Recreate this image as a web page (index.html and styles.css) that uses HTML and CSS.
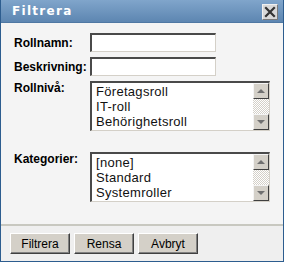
FILE: index.html
```html
<!DOCTYPE html>
<html>
<head>
<meta charset="utf-8">
<link rel="stylesheet" href="styles.css">
</head>
<body>
<div class="dialog">
  <div class="titlebar">
    <span class="title">Filtrera</span>
    <span class="close"><svg width="12" height="12" viewBox="0 0 12 12"><path d="M2 2 L10 10 M10 2 L2 10" stroke="#333" stroke-width="2.2" stroke-linecap="square"/></svg></span>
  </div>
  <div class="content">
    <div class="row r1">
      <label class="lbl">Rollnamn:</label>
      <div class="input"></div>
    </div>
    <div class="row r2">
      <label class="lbl">Beskrivning:</label>
      <div class="input"></div>
    </div>
    <div class="row r3">
      <label class="lbl">Rollnivå:</label>
      <div class="listbox">
        <div class="items">
          <div>Företagsroll</div>
          <div>IT-roll</div>
          <div>Behörighetsroll</div>
        </div>
        <div class="scroll">
          <div class="sbtn"><span class="up"></span></div>
          <div class="track"></div>
          <div class="sbtn"><span class="down"></span></div>
        </div>
      </div>
    </div>
    <div class="row r4">
      <label class="lbl">Kategorier:</label>
      <div class="listbox">
        <div class="items">
          <div>[none]</div>
          <div>Standard</div>
          <div>Systemroller</div>
        </div>
        <div class="scroll">
          <div class="sbtn"><span class="up"></span></div>
          <div class="track"></div>
          <div class="sbtn"><span class="down"></span></div>
        </div>
      </div>
    </div>
  </div>
  <div class="footer">
    <button class="btn">Filtrera</button>
    <button class="btn">Rensa</button>
    <button class="btn">Avbryt</button>
  </div>
</div>
</body>
</html>
```
FILE: styles.css
```css
html, body { margin: 0; padding: 0; }
body { font-family: "Liberation Sans", Arial, sans-serif; font-size: 12px; color: #000; background: #fff; }
.dialog {
  width: 284px; height: 262px; box-sizing: border-box;
  border: 1px solid #2d5d8f; border-top: 0;
  background: #f4f4f4;
  display: flex; flex-direction: column;
}
.titlebar {
  height: 23px; box-sizing: border-box;
  background: linear-gradient(#80a5cb, #5d86b1);
  border-bottom: 1px solid #4f78a3;
  display: flex; align-items: center; justify-content: space-between;
  padding: 0 5px 0 11px;
}
.title { color: #fff; font-weight: bold; letter-spacing: 1.3px; font-family: "DejaVu Sans", sans-serif; font-size: 12px; }
.close {
  width: 16px; height: 16px; box-sizing: border-box;
  background: #d8d8d8; border: 1px solid #f0f0f0; border-right-color: #7a7a7a; border-bottom-color: #7a7a7a;
  display: flex; align-items: center; justify-content: center;
  margin-top: 1px;
}
.content { flex: 1; padding: 10px 0 0 13px; display: flex; flex-direction: column; }
.row { display: flex; align-items: flex-start; }
.lbl { width: 76px; font-weight: bold; font-size: 12px; }
.r1 .lbl, .r2 .lbl { padding-top: 3px; }
.r2 { margin-top: 5px; }
.r3 { margin-top: 5px; }
.r4 { margin-top: 21px; }
.input {
  width: 126px; height: 19px; box-sizing: border-box; background: #fff;
  border-style: solid; border-width: 2px 1px 1px 2px;
  border-color: #4a4a4a #d4d0c8 #d4d0c8 #4a4a4a;
}
.listbox {
  width: 180px; height: 50px; box-sizing: border-box; background: #fff;
  border-style: solid; border-width: 2px 1px 1px 2px;
  border-color: #4a4a4a #d4d0c8 #d4d0c8 #4a4a4a;
  display: flex;
}
.items { flex: 1; padding: 1px 0 0 4px; line-height: 15px; font-size: 13px; letter-spacing: 0.3px; color: #111; white-space: nowrap; overflow: hidden; }
.scroll { width: 16px; display: flex; flex-direction: column; }
.sbtn {
  width: 16px; height: 16px; box-sizing: border-box; background: #d4d0c8;
  border: 1px solid; border-color: #f4f4f4 #404040 #404040 #f4f4f4;
  display: flex; align-items: center; justify-content: center;
}
.track { flex: 1; background-color: #eee; background-image: repeating-conic-gradient(#d4d0c8 0 25%, #fff 0 50%); background-size: 2px 2px; }
.up { width: 0; height: 0; border-left: 4px solid transparent; border-right: 4px solid transparent; border-bottom: 4px solid #707070; }
.down { width: 0; height: 0; border-left: 4px solid transparent; border-right: 4px solid transparent; border-top: 4px solid #707070; }
.footer {
  height: 37px; box-sizing: border-box; border-top: 2px solid #c8c8c0;
  background: #efefef; display: flex; gap: 4px; padding: 7px 0 0 9px;
}
.btn {
  width: 60px; height: 21px; box-sizing: border-box; margin: 0; padding: 0;
  background: #d4d0c8; font-family: "Liberation Sans", Arial, sans-serif; font-size: 12px; color: #000;
  border: 1px solid; border-color: #fff #404040 #404040 #fff;
  box-shadow: inset -1px -1px 0 #808080;
}
```
